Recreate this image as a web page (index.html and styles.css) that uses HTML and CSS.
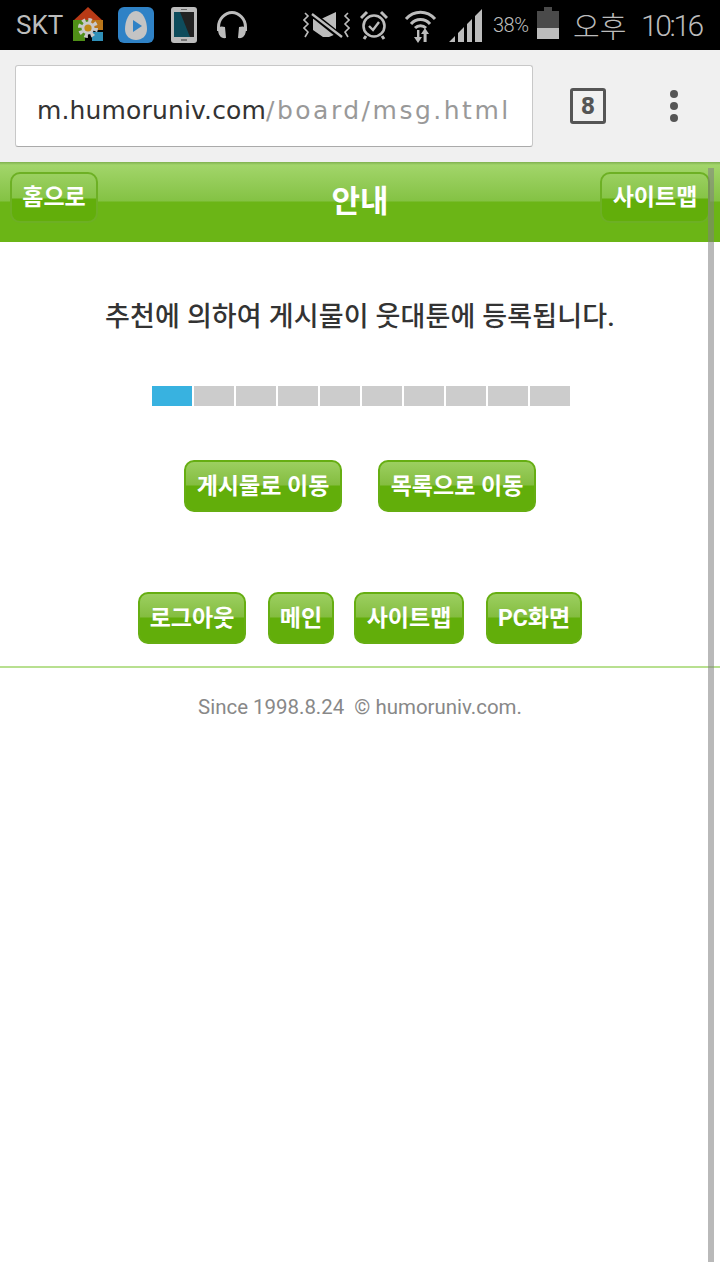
FILE: index.html
```html
<!DOCTYPE html>
<html lang="ko">
  <head>
    <meta charset="UTF-8" />
    <meta name="viewport" content="width=device-width, initial-scale=1.0" />
    <title>안내</title>
    <link rel="stylesheet" href="styles.css">
  </head>
  <body>
    <div class="status">
      <span class="carrier">SKT</span>
      <svg class="ic-home" width="32" height="36" viewBox="0 0 32 36">
        <path d="M16 0 L31 14 L1 14 Z" fill="#b83a16"/>
        <rect x="1" y="13" width="15" height="12" fill="#4f8f17"/>
        <rect x="16" y="13" width="15" height="10" fill="#b9761a"/>
        <rect x="1" y="25" width="12" height="9" fill="#4f8f17"/>
        <rect x="20" y="25" width="11" height="9" fill="#2f8fb8"/>
        <circle cx="16" cy="21" r="8" fill="none" stroke="#c9c9c9" stroke-width="4" stroke-dasharray="3.4 2.9"/>
        <circle cx="16" cy="21" r="6.5" fill="#c9c9c9"/>
        <circle cx="16" cy="21" r="3.6" fill="#c08a16"/>
      </svg>
      <svg class="ic-play" width="36" height="36" viewBox="0 0 36 36">
        <rect width="36" height="36" rx="6" fill="#2f82c6"/>
        <path d="M18 4 C25 4 29 14 29 22 C29 29 24 33 18 33 C12 33 7 29 7 22 C7 14 11 4 18 4 Z" fill="#c4c4c4"/>
        <path d="M15 13 L24 19 L15 25 Z" fill="#2f82c6"/>
      </svg>
      <svg class="ic-phone" width="26" height="36" viewBox="0 0 26 36">
        <rect width="26" height="36" rx="3" fill="#bcbcbc"/>
        <rect x="3" y="5" width="20" height="25" fill="#222"/>
        <path d="M3 5 H9 L19 30 H3 Z" fill="#0e4c5c"/>
        <rect x="10" y="2" width="6" height="1" fill="#666"/>
        <rect x="10" y="32" width="6" height="2" fill="#777"/>
      </svg>
      <svg class="ic-head" width="32" height="28" viewBox="0 0 32 28">
        <path d="M2.5 20 V16 C2.5 8 9 1.500 16 1.500 C23 1.500 29.500 8 29.500 16 V20" fill="none" stroke="#bcbcbc" stroke-width="3"/>
        <path d="M2 18 C2 15 6 15 9 16 L10 27 C5 28 2 24 2 18 Z" fill="#bcbcbc"/>
        <path d="M30 18 C30 15 26 15 23 16 L22 27 C27 28 30 24 30 18 Z" fill="#bcbcbc"/>
      </svg>
      <svg class="ic-mute" width="47" height="26" viewBox="0 0 47 26">
        <path d="M2 1 L5 4 L1 8 L5 12 L1 16 L5 20 L2 25 M45 1 L42 4 L46 8 L42 12 L46 16 L42 20 L45 25" fill="none" stroke="#bcbcbc" stroke-width="1.6"/>
        <path d="M10 7 H18 L33 0 V22 L26 25 H20 L10 18 Z" fill="#bcbcbc"/>
        <path d="M9 2 L38 25" stroke="#000" stroke-width="6"/>
        <path d="M9 2 L39 25" stroke="#bcbcbc" stroke-width="2.4"/>
      </svg>
      <svg class="ic-alarm" width="28" height="30" viewBox="0 0 28 30">
        <circle cx="14" cy="16" r="10.500" fill="none" stroke="#bcbcbc" stroke-width="2.6"/>
        <path d="M9 16 L13 20 L19 12" fill="none" stroke="#bcbcbc" stroke-width="2.4"/>
        <path d="M1 8 L7 2 M27 8 L21 2 M6 26 L4 29 M22 26 L24 29" stroke="#bcbcbc" stroke-width="3"/>
      </svg>
      <svg class="ic-wifi" width="33" height="35" viewBox="0 0 33 35">
        <path d="M2 11 C10 2 23 2 31 11 M7 16 C12 10 21 10 26 16 M11 20 C14 17 19 17 22 20" fill="none" stroke="#bcbcbc" stroke-width="3"/>
        <path d="M13 22 V29 H10 L14 35 L18 29 H15.4 V22 Z M21 20 L17 26 H19.6 V34 H22.6 V26 H25 Z" fill="#bcbcbc"/>
      </svg>
      <svg class="ic-signal" width="33" height="33" viewBox="0 0 33 33">
        <path d="M0 33 L6 27 V33 Z M9 33 V24 L15 18 V33 Z M18 33 V15 L23 10 V33 Z M26 33 V7 L33 0 V33 Z" fill="#bcbcbc"/>
      </svg>
      <span class="batt-num">38%</span>
      <svg class="ic-batt" width="22" height="32" viewBox="0 0 22 32">
        <rect x="7" y="0" width="8" height="4" fill="#4a4a4a"/>
        <rect y="4" width="22" height="18" fill="#4a4a4a"/>
        <rect y="21" width="22" height="11" fill="#bcbcbc"/>
      </svg>
      <span class="ampm">오후</span>
      <span class="clock">10:16</span>
    </div>

    <div class="toolbar">
      <div class="urlbox"><span class="host">m.humoruniv.com</span><span class="path">/board/msg.html</span></div>
      <div class="tabcount">8</div>
      <div class="menu"><i></i><i></i><i></i></div>
    </div>

    <div class="header">
      <a class="hbtn hbtn-home">홈으로</a>
      <h1>안내</h1>
      <a class="hbtn hbtn-map">사이트맵</a>
    </div>

    <div class="content">
      <p class="msg">추천에 의하여 게시물이 웃대툰에 등록됩니다.</p>
      <div class="progress">
        <span class="on"></span><span></span><span></span><span></span><span></span><span></span><span></span><span></span><span></span><span></span>
      </div>
      <div class="actions">
        <a class="btn w158">게시물로 이동</a>
        <a class="btn w158">목록으로 이동</a>
      </div>
      <div class="links">
        <a class="btn w108">로그아웃</a>
        <a class="btn w66">메인</a>
        <a class="btn w110">사이트맵</a>
        <a class="btn w96">PC화면</a>
      </div>
      <div class="footer">Since 1998.8.24 &nbsp;© humoruniv.com.</div>
    </div>

    <div class="scrollbar"></div>
  </body>
</html>
```

FILE: styles.css
```css
html, body {
  margin: 0;
  padding: 0;
  background: #fff;
}
body {
  position: relative;
  width: 720px;
  height: 1280px;
  overflow: hidden;
  font-family: Roboto, "Noto Sans CJK KR", sans-serif;
}
a {
  display: block;
}

/* status bar */
.status {
  display: flex;
  align-items: center;
  height: 50px;
  padding-left: 16px;
  background: #000;
  color: #bcbcbc;
  white-space: nowrap;
}
.status svg {
  flex: none;
}
.carrier {
  width: 47px;
  font-size: 26px;
  line-height: 50px;
}
.ic-home { margin-left: 9px; }
.ic-play { margin-left: 14px; }
.ic-phone { margin-left: 17px; }
.ic-head { margin-left: 19px; }
.ic-mute { margin-left: 55px; }
.ic-alarm { margin-left: 10px; }
.ic-wifi { margin-left: 16px; }
.ic-signal { margin-left: 12px; }
.batt-num {
  width: 36px;
  margin-left: 11px;
  font-size: 20px;
  font-weight: 300;
  letter-spacing: -0.5px;
}
.ic-batt { margin: 0 0 4px 8px; }
.ampm {
  width: 54px;
  margin-left: 14px;
  font-family: "Noto Sans CJK KR", sans-serif;
  font-size: 29px;
  font-weight: 300;
  white-space: nowrap;
}
.clock {
  margin-left: 14px;
  font-size: 30px;
  font-weight: 300;
  letter-spacing: -2.4px;
}

/* browser toolbar */
.toolbar {
  display: flex;
  align-items: center;
  height: 112px;
  padding-left: 15px;
  background: #f0f0f0;
}
.urlbox {
  width: 518px;
  height: 82px;
  box-sizing: border-box;
  padding-left: 21px;
  background: #fff;
  border: 1px solid #c8c8c8;
  border-bottom-color: #aaa;
  border-radius: 3px;
  font-family: "DejaVu Sans", sans-serif;
  font-size: 25px;
  line-height: 89px;
  white-space: nowrap;
  overflow: hidden;
}
.host {
  color: #333;
  letter-spacing: 0.15px;
}
.path {
  color: #999;
  letter-spacing: 2.5px;
}
.tabcount {
  width: 30px;
  height: 30px;
  margin-left: 37px;
  border: 3px solid #555;
  border-radius: 3px;
  color: #555;
  font-family: "DejaVu Sans Condensed", "DejaVu Sans", sans-serif;
  font-size: 23px;
  font-weight: bold;
  line-height: 30px;
  text-align: center;
}
.menu {
  display: flex;
  flex-direction: column;
  gap: 4px;
  margin-left: 64px;
}
.menu i {
  display: block;
  width: 8px;
  height: 8px;
  border-radius: 50%;
  background: #555;
}

/* green title bar */
.header {
  display: grid;
  grid-template-columns: 1fr auto 1fr;
  align-items: center;
  height: 80px;
  padding: 0 10px;
  box-sizing: border-box;
  background: linear-gradient(#7fb04f 0, #a2d56a 3px, #84c244 39px, #6bb516 40px, #6bb516 100%);
}
.header h1 {
  margin: 0;
  color: #fff;
  font-size: 31px;
  font-weight: 700;
  line-height: 76px;
}
.hbtn {
  height: 51px;
  margin-top: -9px;
  box-sizing: border-box;
  border: 2px solid #6db024;
  border-radius: 10px;
  background: linear-gradient(rgba(98, 174, 10, 0) 0, rgba(98, 174, 10, 0) 24px, #62ae0a 25px, #62ae0a 100%);
  color: #fff;
  font-size: 23px;
  font-weight: 700;
  line-height: 47px;
  text-align: center;
}
.hbtn-home {
  width: 88px;
  justify-self: start;
}
.hbtn-map {
  width: 110px;
  justify-self: end;
}

/* page body */
.msg {
  margin: 0;
  padding-top: 56px;
  color: #333;
  font-size: 27px;
  font-weight: 500;
  letter-spacing: 0.15px;
  line-height: 38px;
  text-align: center;
}
.progress {
  display: flex;
  gap: 2px;
  justify-content: center;
  margin-top: 50px;
  padding-left: 2px;
}
.progress span {
  width: 40px;
  height: 20px;
  background: #ccc;
}
.progress .on {
  background: #38b2e0;
}
.actions, .links {
  display: flex;
  justify-content: center;
}
.actions {
  gap: 36px;
  margin-top: 54px;
}
.links {
  gap: 20px;
  margin-top: 80px;
}
.links .btn:first-child {
  margin-right: 2px;
}
.links .btn:last-child {
  margin-left: 2px;
}
.btn {
  height: 52px;
  box-sizing: border-box;
  border: 2px solid #66ae12;
  border-radius: 10px;
  background: linear-gradient(#9ccf60 0, #84bd40 23px, #62ae0a 24px, #62ae0a 100%);
  color: #fff;
  font-size: 23px;
  font-weight: 700;
  line-height: 49px;
  text-align: center;
  white-space: nowrap;
}
.w158 { width: 158px; }
.w108 { width: 108px; }
.w66 { width: 66px; }
.w110 { width: 110px; }
.w96 { width: 96px; }

.footer {
  margin-top: 22px;
  padding-top: 24px;
  border-top: 2px solid #b8e090;
  color: #888;
  font-size: 20.45px;
  line-height: 30px;
  text-align: center;
}

.scrollbar {
  position: absolute;
  top: 168px;
  left: 708px;
  width: 6px;
  height: 1094px;
  background: rgba(128, 128, 128, 0.55);
}
```
